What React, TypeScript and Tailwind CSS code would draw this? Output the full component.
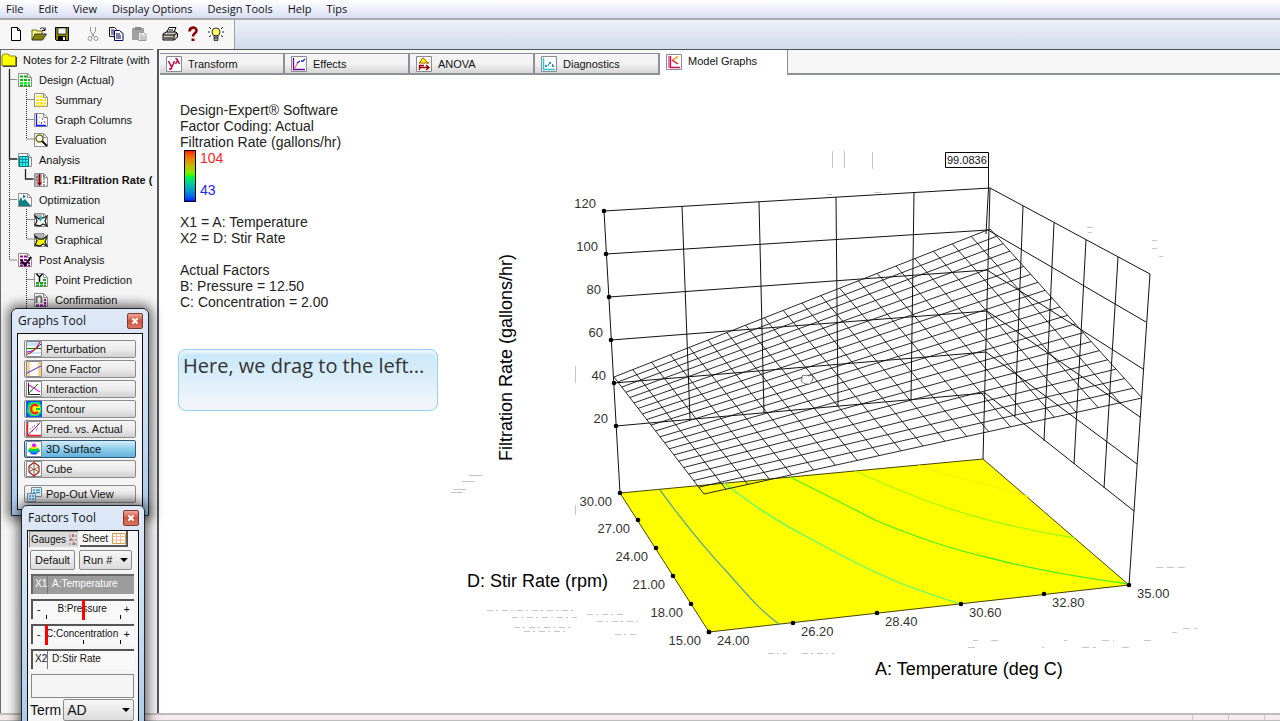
import type { ReactNode } from 'react';
import { X } from 'lucide-react';

const menuItems = ['File', 'Edit', 'View', 'Display Options', 'Design Tools', 'Help', 'Tips'];

type IconName =
    | 'folder' | 'design' | 'summary' | 'columns' | 'evaluation' | 'analysis' | 'response' | 'optimization'
    | 'numerical' | 'graphical' | 'post' | 'prediction' | 'confirmation'
    | 'transform' | 'effects' | 'anova' | 'diagnostics' | 'model'
    | 'perturbation' | 'oneFactor' | 'interaction' | 'contour' | 'predicted' | 'surface' | 'cube' | 'popout';

const page = (
    <>
        <path d="M1.5 1.5h9l4 4v9h-13z" fill="#fff" stroke="#8f8f8f" />
        <path d="M10.5 1.5v4h4" fill="none" stroke="#8f8f8f" />
    </>
);
const frame = <path d="M.5.5h15v15H.5z" fill="#fff" stroke="#8a8a90" />;

const cells = (color: string, top = 3) => (
    <path
        d={`M3 ${top + 1.5}h3m1 0h3M3 8h3m1 0h3m1 0h2M3 11h3m1 0h3m1 0h2M3 13.5h3m1 0h3m1 0h2`}
        stroke={color}
        strokeWidth="2"
        fill="none"
    />
);

const icons: Record<IconName, ReactNode> = {
    folder: (
        <>
            <path d="M1 4l1.500-2h4.500l1.500 2h6v9.500H1z" fill="#ff0" stroke="#8a8600" />
            <path d="M2 14.500h13.500V5" fill="none" stroke="#444" />
        </>
    ),
    design: <>{page}{cells('#00b400')}<path d="M3 11h3m1 0h3m1 0h2" stroke="#0f2" strokeWidth="2" /></>,
    summary: <>{page}{cells('#ffe600')}</>,
    columns: (
        <>
            {page}
            <path d="M3.500 2v11.500H13" fill="none" stroke="#11f" strokeWidth="1.300" />
            <path d="M6 5h1M6 10h1" stroke="#e8c800" strokeWidth="1.500" />
            <path d="M9 7h1m1 3h1" stroke="#f0a" strokeWidth="1.500" />
            <path d="M8 11h1" stroke="#11f" strokeWidth="1.500" />
        </>
    ),
    evaluation: (
        <>
            {page}
            <circle cx="6.500" cy="6.500" r="3.500" fill="#fff" stroke="#777000" strokeWidth="1.500" />
            <path d="M9 9l5 5" stroke="#111" strokeWidth="2" />
        </>
    ),
    analysis: (
        <>
            {page}
            <path d="M2.500 4.500h9v10h-9z" fill="#2ee" stroke="#078" />
            <path d="M5.500 5v9m3-9v9M3 7.500h8M3 10.500h8" stroke="#078" strokeWidth=".7" />
        </>
    ),
    response: (
        <>
            {page}
            <path d="M2 2h7v12H2z" fill="#b5b5b5" />
            <path d="M6.500 2v9" stroke="#900" strokeWidth="1.800" />
            <path d="M4 10.500h5L6.500 14z" fill="#900" />
            <path d="M10 4h2m-2 3h2m-2 3h2m-2 3h2M3 5h2M3 8h2" stroke="#444" />
        </>
    ),
    optimization: (
        <>
            {page}
            <path d="M2 14V9l2-4 1.500 4L8 7l6 7z" fill="#087f83" />
            <path d="M6 2.500v4l3-2z" fill="#087f83" />
        </>
    ),
    numerical: (
        <>
            {page}
            <path d="M2 2h7v4H2z" fill="#b5b5b5" />
            <path d="M2 4l4 3 4-1 4-2-2 5 2 5-4-2-3 2-5-1 2-4z" fill="#fff" stroke="#222" strokeWidth="1.300" />
            <path d="M7 4v6l3-4z" fill="#0bd" />
        </>
    ),
    graphical: (
        <>
            {page}
            <path d="M2 2h8v4H2z" fill="#b5b5b5" />
            <path d="M2 4l4 3h4l4-3-2 6 2 4-4-2-3 2-5-1 2-4z" fill="#ff0" stroke="#222" strokeWidth="1.300" />
        </>
    ),
    post: <>{page}{cells('#909')}<path d="M4 8l4 5 6-8" stroke="#000" strokeWidth="2" fill="none" /></>,
    prediction: (
        <>
            {page}
            <path d="M10 8h3M3 11h3m1 0h3m1 0h2M3 13.500h3m1 0h3m1 0h2" stroke="#19a319" strokeWidth="2" />
            <path d="M3.500 2l3 3 3-3M6.500 5v5" stroke="#000" strokeWidth="1.500" fill="none" />
        </>
    ),
    confirmation: (
        <>
            {page}
            <path d="M11 8h2m-2 3h2M3 13.500h3m1 0h3m1 0h2" stroke="#909" strokeWidth="2" />
            <path d="M3.500 11V4m0 2c2-2.500 5-2.500 5 1v4" stroke="#777" strokeWidth="2" fill="none" />
        </>
    ),
    transform: (
        <>
            {frame}
            <path d="M2.500 5l3 6M8.500 5l-3.500 8H3M9.500 2.500l1.500.5 2.500 5M11.500 4.500L9.500 8" stroke="#c00040" strokeWidth="1.500" fill="none" />
        </>
    ),
    effects: (
        <>
            {frame}
            <path d="M2.500 2v11.500H14" stroke="#609" strokeWidth="1.300" fill="none" />
            <path d="M4 12l3-6" stroke="#f36" />
            <path d="M6 7l3-2m1 0h2l2-2" stroke="#22c" strokeWidth="1.300" fill="none" />
        </>
    ),
    anova: (
        <>
            {frame}
            <path d="M3 7c2 0 2-5 4-5s3 5 6 5z" fill="#ff0" stroke="#a50" />
            <path d="M3.500 14V9.500H8M4 11.500h8M10 9l3 2.500-3 2.500" stroke="#900" strokeWidth="1.500" fill="none" />
        </>
    ),
    diagnostics: (
        <>
            {frame}
            <path d="M2.500 2v11.500H14" stroke="#29c3cf" strokeWidth="1.500" fill="none" />
            <path d="M4 10h2m2-3h2m1 3h2M7 9h1m3 0h1" stroke="#1a9ad8" strokeWidth="1.800" />
        </>
    ),
    model: (
        <>
            {frame}
            <path d="M2 2h2v12H2z" fill="#f7a" />
            <path d="M4.500 2v11.500H14" stroke="#d01050" strokeWidth="1.300" fill="none" />
            <path d="M12 2.500L7 6" stroke="#fa3" strokeWidth="2" />
            <path d="M6 6l6 4" stroke="#e0104a" strokeWidth="1.500" />
        </>
    ),
    perturbation: (
        <>
            {frame}
            <path d="M1 1h14v4H1zM1 11h14v2H1z" fill="#c8e6f5" />
            <path d="M1 7.500h14" stroke="#080" />
            <path d="M1 11c8-1 10-4 14-8" stroke="#22f" fill="none" />
            <path d="M1 13.500C8 11 11 7 14 1" stroke="#e22" strokeWidth="1.300" fill="none" />
        </>
    ),
    oneFactor: (
        <>
            {frame}
            <path d="M1 1h3v14H1zM12 1h3v14h-3z" fill="#ffd08a" />
            <path d="M1 12L15 5" stroke="#33e" />
        </>
    ),
    interaction: (
        <>
            {frame}
            <path d="M2.500 2v11.500H14" stroke="#222" fill="none" />
            <path d="M3 4l11 7" stroke="#e2d" strokeWidth="1.300" />
            <path d="M3 12l9-9" stroke="#080" />
        </>
    ),
    contour: (
        <>
            <path d="M0 0h16v16H0z" fill="#15e" />
            <path d="M2 3l3-2h8l2 3v8l-3 3H5l-4-4z" fill="#0e6" />
            <circle cx="9" cy="8" r="5.500" fill="#ff0" />
            <path d="M12 5c-4-3-7 0-7 3s3 6 7 3" stroke="#f22" strokeWidth="2.500" fill="none" />
            <path d="M10 8h4" stroke="#0c4" strokeWidth="2" />
        </>
    ),
    predicted: (
        <>
            {frame}
            <path d="M1.500 1v13.500H15" stroke="#e22" strokeWidth="1.500" fill="none" />
            <path d="M2 14L14 2" stroke="#92b" />
            <path d="M4 8h1m1 2h1m1-5h1m1 4h1m0-6h1M6 6h1m4 1h1" stroke="#92b" />
        </>
    ),
    surface: (
        <>
            {frame}
            <ellipse cx="8" cy="12" rx="3.500" ry="1.500" fill="#15f" />
            <ellipse cx="8" cy="10" rx="6" ry="2" fill="#18f" />
            <ellipse cx="8" cy="8.500" rx="5.500" ry="1.800" fill="#0d3" />
            <ellipse cx="8" cy="6.500" rx="3.500" ry="1.500" fill="#fd0" />
            <circle cx="8" cy="4.200" r="2" fill="#e1f" />
        </>
    ),
    cube: (
        <>
            {frame}
            <path d="M8 1.500l5 3.500v6l-5 4-5-4V5z" stroke="#a11" strokeWidth="1.200" fill="none" />
            <path d="M8 1.500v13M3 5l5 4 5-4M3 11l5-3 5 3" stroke="#853" fill="none" />
        </>
    ),
    popout: (
        <>
            <path d="M5.500 1.500h10v9h-10z" fill="#e5f4fc" stroke="#789" />
            <path d="M1.500 7.500h8v8h-8z" fill="#d5edfb" stroke="#789" />
            <path d="M7 4h2m1 0h4M7 6.500h2m1 0h4M3 10h2m1 0h2M3 13h2m1 0h2" stroke="#39c" strokeWidth="1.300" />
        </>
    ),
};

function Icon({ name, className = 'w-4 h-4' }: { name: IconName; className?: string }) {
    return (
        <svg viewBox="0 0 16 16" className={`${className} shrink-0`} aria-hidden="true">
            {icons[name]}
        </svg>
    );
}

const toolbar: { label: string; space: string; art: ReactNode }[] = [
    {
        label: 'New',
        space: 'ml-2',
        art: <path d="M3.500 1.500h6l3 3v10h-9zM9.500 1.500v3h3" fill="#fff" stroke="#000" />,
    },
    {
        label: 'Open',
        space: 'ml-[7px]',
        art: (
            <>
                <path d="M1 14V4h4l1 1h5v3" fill="#ffff8c" stroke="#6b6a00" />
                <path d="M1 14l3-6h11.500l-4 6z" fill="#868400" stroke="#333" />
                <path d="M9 3c2-2 4-1 5 1m0-2.500V4.500h-3" fill="none" stroke="#000" />
            </>
        ),
    },
    {
        label: 'Save',
        space: 'ml-[7px]',
        art: (
            <>
                <path d="M1.500 1.500h13v13h-12l-1-1z" fill="#868400" stroke="#000" />
                <path d="M4 2h8v6H4z" fill="#f4f4f4" stroke="#000" strokeWidth=".6" />
                <path d="M4 10h8v4H4z" fill="#000" />
                <path d="M9 11h2v3H9z" fill="#eee" />
            </>
        ),
    },
    {
        label: 'Cut',
        space: 'ml-[15px]',
        art: (
            <>
                <path d="M5.500 1v4l4 6M10.500 1v4l-4 6" fill="none" stroke="#999" />
                <circle cx="5" cy="12.500" r="2" fill="none" stroke="#999" />
                <circle cx="11" cy="12.500" r="2" fill="none" stroke="#999" />
            </>
        ),
    },
    {
        label: 'Copy',
        space: 'ml-[7px]',
        art: (
            <>
                <path d="M1.500 1.500h5l2 2v7h-7z" fill="#fff" stroke="#111" />
                <path d="M6.500 4.500h5l3.500 3v7H6.500z" fill="#fff" stroke="#006" />
                <path d="M3 4h3M3 6h3M3 8h3M8 8h4m-4 2h5m-5 2h5" stroke="#006" />
            </>
        ),
    },
    {
        label: 'Paste',
        space: 'ml-[7px]',
        art: (
            <>
                <path d="M1 2h12v12H1z" fill="#a0a0a0" />
                <path d="M4 1h6v3H4z" fill="#888" />
                <path d="M7.500 6.500h5l2.500 2v6H7.500z" fill="#f2f2f2" stroke="#999" />
                <path d="M9 9h3m-3 2h5m-5 2h5" stroke="#999" />
            </>
        ),
    },
    {
        label: 'Print',
        space: 'ml-[15px]',
        art: (
            <>
                <path d="M5 6l2-4.500h7L12 6" fill="#fff" stroke="#000" />
                <path d="M1 8l3-2h10l1.500 1.500V11l-3 3H1z" fill="#ccc" stroke="#000" />
                <path d="M1 9h11v5M12 9l3-2M2 12h9M7 4h4" fill="none" stroke="#000" />
                <path d="M8 10.500h2" stroke="#dd0" />
            </>
        ),
    },
    {
        label: 'Help',
        space: 'ml-[7px]',
        art: (
            <>
                <path d="M4.500 5.500c0-5 7-5 7-1 0 3-3.500 2.500-3.500 6" fill="none" stroke="#8b0000" strokeWidth="2.600" />
                <path d="M6.500 12.500h3v2.500h-3z" fill="#8b0000" />
            </>
        ),
    },
    {
        label: 'Tips',
        space: 'ml-[7px]',
        art: (
            <>
                <circle cx="8" cy="6" r="4" fill="#ffff60" stroke="#333" />
                <path d="M6 10h4v4.500H6z" fill="#aaa" stroke="#222" strokeWidth=".8" />
                <path d="M1 1l2 2M15 1l-2 2M0 6h2m12 0h2M1 11l2-1.500M15 11l-2-1.500M6 12h4" stroke="#222" />
            </>
        ),
    },
];

const tree: { label: string; icon: IconName; level: number }[] = [
    { label: 'Notes for 2-2 Filtrate (with', icon: 'folder', level: 0 },
    { label: 'Design (Actual)', icon: 'design', level: 1 },
    { label: 'Summary', icon: 'summary', level: 2 },
    { label: 'Graph Columns', icon: 'columns', level: 2 },
    { label: 'Evaluation', icon: 'evaluation', level: 2 },
    { label: 'Analysis', icon: 'analysis', level: 1 },
    { label: 'R1:Filtration Rate (', icon: 'response', level: 2 },
    { label: 'Optimization', icon: 'optimization', level: 1 },
    { label: 'Numerical', icon: 'numerical', level: 2 },
    { label: 'Graphical', icon: 'graphical', level: 2 },
    { label: 'Post Analysis', icon: 'post', level: 1 },
    { label: 'Point Prediction', icon: 'prediction', level: 2 },
    { label: 'Confirmation', icon: 'confirmation', level: 2 },
];
const indents = ['pl-0', 'pl-4', 'pl-8'];

const tabs: { label: string; icon: IconName }[] = [
    { label: 'Transform', icon: 'transform' },
    { label: 'Effects', icon: 'effects' },
    { label: 'ANOVA', icon: 'anova' },
    { label: 'Diagnostics', icon: 'diagnostics' },
];

const graphButtons: { label: string; icon: IconName }[] = [
    { label: 'Perturbation', icon: 'perturbation' },
    { label: 'One Factor', icon: 'oneFactor' },
    { label: 'Interaction', icon: 'interaction' },
    { label: 'Contour', icon: 'contour' },
    { label: 'Pred. vs. Actual', icon: 'predicted' },
    { label: '3D Surface', icon: 'surface' },
    { label: 'Cube', icon: 'cube' },
];

type Point = [number, number];

const lerp = (a: Point, b: Point, t: number): Point => [a[0] + (b[0] - a[0]) * t, a[1] + (b[1] - a[1]) * t];
const seg = (a: Point, b: Point) => `M${a[0].toFixed(1)} ${a[1].toFixed(1)}L${b[0].toFixed(1)} ${b[1].toFixed(1)}`;

// corners of the response surface
const left: Point = [614, 377];
const back: Point = [990, 229];
const right: Point = [1142, 398];
const front: Point = [704, 494];

// rows spread out slightly towards the viewer
const nearer = (t: number) => t / (t + 1.17 * (1 - t));

const steps = Array.from({ length: 21 }, (_, i) => i / 20);
const mesh = steps
    .map(
        (t) =>
            seg(lerp(left, front, nearer(t)), lerp(back, right, nearer(t))) +
            seg(lerp(left, back, t), lerp(front, right, t))
    )
    .join('');

const levels: { label: string; l: Point; c: Point; r: Point }[] = [
    { label: '120', l: [604, 211], c: [990, 188], r: [1150, 274] },
    { label: '100', l: [606, 254], c: [988, 230], r: [1146, 322] },
    { label: '80', l: [609, 297], c: [987, 270], r: [1143, 369] },
    { label: '60', l: [611, 340], c: [987, 311], r: [1140, 417] },
    { label: '40', l: [614, 383], c: [986, 352], r: [1137, 464] },
    { label: '20', l: [616, 426], c: [985, 393], r: [1134, 511] },
];

const verticals: [Point, Point][] = [
    [[682, 206], [690, 419]],
    [[759, 202], [764, 413]],
    [[836, 197], [838, 406]],
    [[914, 193], [911, 400]],
    [[1023, 206], [1015, 416]],
    [[1054, 223], [1044, 441]],
    [[1086, 240], [1074, 464]],
    [[1118, 257], [1104, 488]],
    [[604, 211], [620, 493]],
    [[990, 188], [983, 459]],
    [[1150, 274], [1129, 585]],
];

const stirTicks: { label: string; at: Point }[] = [
    { label: '30.00', at: [620, 493] },
    { label: '27.00', at: [638, 520] },
    { label: '24.00', at: [656, 548] },
    { label: '21.00', at: [673, 576] },
    { label: '18.00', at: [691, 604] },
    { label: '15.00', at: [709, 632] },
];
const tempTicks: { label: string; at: Point }[] = [
    { label: '24.00', at: [709, 632] },
    { label: '26.20', at: [793, 623] },
    { label: '28.40', at: [877, 613] },
    { label: '30.60', at: [961, 604] },
    { label: '32.80', at: [1044, 594] },
    { label: '35.00', at: [1129, 585] },
];

function SurfacePlot() {
    return (
        <svg viewBox="440 75 840 638" className="w-full h-auto" role="img" aria-label="Filtration rate response surface">
            <path d="M620 493L983 459 1129 585 709 632z" fill="#ff0" stroke="#444400" />
            <g fill="none" strokeWidth="1.3">
                <path d="M660 490C682 520 708 552 728 573C748 596 762 612 780 625" stroke="#5fa98c" />
                <path d="M724 483C754 506 775 520 809 538C842 556 868 570 900 583C924 592 944 599 961 604" stroke="#5dfa70" />
                <path d="M790 477C820 492 850 507 875 520C915 537 950 549 990 558C1035 570 1085 578 1129 584" stroke="#4df020" />
                <path d="M855 471C884 484 908 494 930 502C970 517 1030 531 1075 538" stroke="#a8f80c" />
                <path d="M918 465C946 475 966 480 985 484C1005 490 1018 494 1029 497" stroke="#ffec00" />
            </g>
            <path d={mesh} fill="none" stroke="#111" strokeWidth=".9" />
            <g fill="none" stroke="#111">
                {levels.map(({ label, l, c, r }) => (
                    <path key={label} d={seg(l, c) + seg(c, r)} />
                ))}
                {verticals.map(([a, b]) => (
                    <path key={a[0]} d={seg(a, b)} />
                ))}
                <path d="M988.500 160v28L986 234" />
            </g>
            <path d="M945.500 152.500h43v15h-43z" fill="#fff" stroke="#000" />
            <text x="947" y="164" fontSize="11" fill="#111">99.0836</text>
            <path d="M802 379v-3l2-1 1 1 2-1 2 1 3-1 1 3-1 3-2 3h-5l-4-3z" fill="#fff" stroke="#444" strokeWidth=".7" />

            {[...stirTicks, ...tempTicks].map(({ at }, i) => (
                <circle key={i} cx={at[0]} cy={at[1]} r="2.3" />
            ))}
            {levels.map(({ label, l }) => (
                <g key={label}>
                    <circle cx={l[0]} cy={l[1]} r="2.3" />
                    <text x={l[0] - 8} y={l[1] - 3} textAnchor="end" fontSize="13" fill="#333">{label}</text>
                </g>
            ))}
            {stirTicks.map(({ label, at }) => (
                <text key={label} x={at[0] - 8} y={at[1] + 13} textAnchor="end" fontSize="13" fill="#333">{label}</text>
            ))}
            {tempTicks.map(({ label, at }) => (
                <text key={label} x={at[0] + 8} y={at[1] + 13} fontSize="13" fill="#333">{label}</text>
            ))}
            <text x="467" y="587" fontSize="18">D: Stir Rate (rpm)</text>
            <text x="875" y="675" fontSize="18">A: Temperature (deg C)</text>
            <text transform="translate(512 461) rotate(-90)" fontSize="18">Filtration Rate (gallons/hr)</text>

            <g fill="none" stroke="#c6c6c6">
                <path d="M832.500 151v17M844.500 151v17M872.500 152v17M575.500 366v17M575.500 505v10" />
                <path d="M469 475.500h13M462 481.500h13M453 489.500h13M451 492.500h12M1087 227.500h6M1088 232.500h4M1152 240.500h5M1152 248.500h5M1159 256.500h4M874 192.500h8M827 194.500h5" />
                <path d="M487 610.500h90M512 617.500h65M514 627.500h57M524 631.500h44M587 614.500h38M597 621.500h40M615 634.500h22M768 653.500h18M802 653.500h32" strokeDasharray="6 3 2 4" />
                <path d="M973 640.500h5M991 640.500h10M1064 640.500h3M1102 640.500h12M1144 640.500h10M968 647.500h10M1042 647.500h2M1082 647.500h14M1122 647.500h10M1156 567.500h30M1172 632.500h5M1183 628.500h14" strokeDasharray="7 4" />
            </g>
        </svg>
    );
}

function ToolWindow({ title, className, children }: { title: string; className: string; children: ReactNode }) {
    return (
        <section className={`absolute rounded-t-md border border-[#1c2532] bg-linear-to-b from-[#dfe9f8] via-[#c9dcf2] to-[#a9c8ea] px-[5px] pb-[5px] shadow-[0_0_12px_3px_rgba(0,0,0,0.6)] ${className}`}>
            <header className="flex h-6 items-center justify-between pl-px">
                <h2 className="font-['Open_Sans',sans-serif] text-[12px] leading-4">{title}</h2>
                <button aria-label={`Close ${title}`} className="flex h-4 w-4 items-center justify-center rounded-xs border border-[#7c3a33] bg-linear-to-b from-[#eaa89a] via-[#d0523c] to-[#d9765f] text-white">
                    <X className="h-2 w-2" strokeWidth={6} />
                </button>
            </header>
            <div className="border border-[#111] bg-[#f5f5f5]">{children}</div>
        </section>
    );
}

function GraphButton({ label, icon, active }: { label: string; icon: IconName; active?: boolean }) {
    return (
        <button
            className={`flex h-[18px] w-full items-center gap-1 rounded-xs border pl-px whitespace-nowrap ${
                active
                    ? 'border-[#2b5a76] bg-linear-to-b from-[#d5edfa] via-[#8fcdec] to-[#62b2dc]'
                    : 'border-[#8b8b8b] bg-linear-to-b from-[#f5f5f5] via-[#ececec] to-[#d2d2d2]'
            }`}
        >
            <Icon name={icon} />
            {label}
        </button>
    );
}

function Gauge({ label, value }: { label: string; value: number }) {
    return (
        <label className="relative flex h-5 items-start justify-between border-t-2 border-l-2 border-[#555] bg-[#f8f8f8] px-1 leading-4">
            <span>-</span>
            <span className="text-[10px]">{label}</span>
            <span>+</span>
            <span className="absolute bottom-0 left-[13px] h-1 w-px bg-black" />
            <span className="absolute bottom-0 left-[50px] h-1 w-px bg-black" />
            <span className="absolute bottom-0 left-[87px] h-1 w-px bg-black" />
            <input
                type="range"
                defaultValue={value}
                className="absolute -top-px left-3 h-5 w-[77px] appearance-none bg-transparent [&::-webkit-slider-thumb]:h-5 [&::-webkit-slider-thumb]:w-[3px] [&::-webkit-slider-thumb]:appearance-none [&::-webkit-slider-thumb]:bg-[#f00]"
            />
        </label>
    );
}

function Picker({ label, option, className }: { label: string; option: string; className: string }) {
    return (
        <div className="relative flex-1">
            <select aria-label={label} className={`block w-full appearance-none rounded-xs border border-[#8b8b8b] bg-linear-to-b from-[#f7f7f7] to-[#dcdcdc] pl-[3px] ${className}`}>
                <option>{option}</option>
            </select>
            <svg viewBox="0 0 8 4" className="pointer-events-none absolute top-1/2 right-1 h-1 w-2 -translate-y-1/2">
                <path d="M0 0h8L4 4z" />
            </svg>
        </div>
    );
}

export default function App() {
    return (
        <div className="relative flex h-screen flex-col overflow-hidden bg-[#f5f5f5] font-['Liberation_Sans',Arial,sans-serif] text-[11px] text-[#111]">
            <nav className="flex h-5 items-center gap-[15px] border-b-2 border-[#a9a9ad] bg-linear-to-b from-white via-[#eceffa] to-[#d9def2] pl-1.5 font-['Open_Sans',sans-serif] text-[11px]">
                {menuItems.map((item) => (
                    <button key={item} className="leading-4">{item}</button>
                ))}
            </nav>

            <div className="flex h-[29px] bg-linear-to-b from-[#eef1f8] to-[#d2dbeb]">
                <div className="flex w-[235px] items-center border-r border-[#a0a0a0] bg-[#f7f7f7] pb-px">
                    {toolbar.map(({ label, space, art }) => (
                        <button key={label} aria-label={label} className={space}>
                            <svg viewBox="0 0 16 16" className="h-4 w-4">{art}</svg>
                        </button>
                    ))}
                </div>
            </div>

            <div className="flex min-h-0 flex-1">
                <aside className="relative w-[153px] shrink-0 overflow-hidden border-t border-l border-[#6a6a6a]">
                    <svg className="absolute top-0 left-0 h-[270px] w-10" fill="none" stroke="#222" aria-hidden="true">
                        <path d="M8.500 19v90h8M24.500 119v10h8" strokeWidth="1.300" />
                        <path d="M8.500 110v100h8M8.500 29.500h8M8.500 149.500h8M25.500 39v50h7M25.500 49.500h7M25.500 69.500h7M25.500 159v30h7M25.500 169.500h7M25.500 219v50M25.500 229.500h7M25.500 249.500h7" strokeDasharray="1 1" />
                    </svg>
                    <ul className="relative">
                        {tree.map(({ label, icon, level }) => (
                            <li key={label} className={indents[level]}>
                                <button className={`flex h-5 items-center whitespace-nowrap ${icon === 'response' ? 'gap-[5px] font-bold' : 'gap-1.5'}`}>
                                    <Icon name={icon} />
                                    {label}
                                </button>
                            </li>
                        ))}
                    </ul>
                </aside>

                <main className="ml-1 flex min-w-0 flex-1 flex-col border-t border-l-2 border-[#55555c] bg-white">
                    <div role="tablist" className="flex h-[25px] items-end bg-[#f6f6f6] pl-px">
                        {tabs.map(({ label, icon }) => (
                            <button
                                key={label}
                                role="tab"
                                className="flex h-[22px] w-[125px] items-center gap-1.5 border-t border-r-2 border-b-2 border-[#8f8f99] bg-linear-to-b from-[#f3f3f3] from-50% to-[#d6d6d6] pt-px pl-1.5"
                            >
                                <Icon name={icon} />
                                {label}
                            </button>
                        ))}
                        <button role="tab" aria-selected="true" className="flex h-[25px] w-32 items-center gap-1.5 border-r border-[#8f8f99] bg-white pb-0.5 pl-1.5">
                            <Icon name="model" />
                            Model Graphs
                        </button>
                        <div className="h-[25px] flex-1 border-b-2 border-[#8f8f99]" />
                    </div>

                    <div className="flex items-start">
                        <div className="w-[281px] shrink-0 pt-[27px] pl-[19px] text-[14px] leading-4 text-[#222]">
                            <p className="pl-0.5">Design-Expert® Software</p>
                            <p className="pl-0.5">Factor Coding: Actual</p>
                            <p className="pl-0.5">Filtration Rate (gallons/hr)</p>
                            <div className="flex h-[52px] gap-1 pl-1.5">
                                <div className="w-3 border border-black bg-linear-to-b from-[#f00] via-[#0f0] to-[#00f]" />
                                <div className="flex flex-col gap-4">
                                    <span className="text-[#f22]">104</span>
                                    <span className="text-[#22f]">43</span>
                                </div>
                            </div>
                            <p className="mt-3 pl-0.5">X1 = A: Temperature</p>
                            <p className="pl-0.5">X2 = D: Stir Rate</p>
                            <p className="mt-4 pl-0.5">Actual Factors</p>
                            <p className="pl-0.5">B: Pressure = 12.50</p>
                            <p className="pl-0.5">C: Concentration = 2.00</p>
                            <div className="mt-[39px] h-[62px] w-[260px] rounded-lg border border-[#8fd0f5] bg-linear-to-b from-[#c6e7fb] to-[#f4f6f9] pt-1 pl-1 font-['Open_Sans',sans-serif] text-[20px] leading-6 whitespace-nowrap text-[#333] shadow-[inset_0_3px_3px_rgba(255,255,255,0.7)]">
                                Here, we drag to the left...
                            </div>
                        </div>
                        <div className="min-w-0 flex-1">
                            <SurfacePlot />
                        </div>
                    </div>
                </main>
            </div>

            <footer className="flex h-2 shrink-0 justify-end border-t-2 border-b border-[#bdbdbd] bg-[#f7e9ec]">
                <div className="w-9 border-l border-[#d0c5c8]" />
                <div className="w-9 border-l border-[#d0c5c8]" />
                <div className="w-4 border-l border-[#d0c5c8]" />
            </footer>

            <ToolWindow title="Graphs Tool" className="top-[308px] left-[11px] w-[138px]">
                <div className="flex flex-col gap-0.5 p-1.5">
                    {graphButtons.map(({ label, icon }) => (
                        <GraphButton key={label} label={label} icon={icon} active={icon === 'surface'} />
                    ))}
                    <div className="pt-[5px]">
                        <GraphButton label="Pop-Out View" icon="popout" />
                    </div>
                </div>
            </ToolWindow>

            <ToolWindow title="Factors Tool" className="top-[505px] left-[21px] w-[124px]">
                <div className="pr-1 pb-3 pl-px">
                    <div className="flex h-4 gap-0.5 text-[10px]">
                        <button className="flex w-[49px] items-center gap-0.5 border-t border-l border-[#888] bg-[#dadada] pl-px">
                            Gauges
                            <svg viewBox="0 0 10 14" className="h-3.5 w-2.5">
                                <path d="M1 3h8M1 7h8M1 11h8" stroke="#777" strokeDasharray="2 1" />
                                <path d="M5 1v3M3 5v3M6 9v3" stroke="#c22" />
                            </svg>
                        </button>
                        <button className="flex w-12 items-center gap-1 border-r-2 border-b-2 border-[#555] bg-[#fbfbfb] pl-0.5">
                            Sheet
                            <svg viewBox="0 0 14 11" className="h-[11px] w-3.5">
                                <path d="M.5.5h13v10H.5z" fill="#fff" stroke="#d39a40" />
                                <path d="M4.500 1v9m4-9v9M1 3.500h12M1 7h12" stroke="#f2b8a0" />
                            </svg>
                        </button>
                    </div>
                    <div className="mt-[3px] flex h-5 gap-1 pr-0.5 pl-px">
                        <button className="w-[45px] rounded-xs border border-[#8b8b8b] bg-linear-to-b from-[#f7f7f7] to-[#dcdcdc]">Default</button>
                        <Picker label="Run" option="Run #" className="h-5" />
                    </div>
                    <div className="mt-1 flex flex-col gap-[5px] pl-0.5">
                        <div className="flex h-5 gap-1 border-t-2 border-l-2 border-[#666] bg-[#9c9c9c] pl-0.5 text-[10px] leading-4 text-white">
                            <span className="w-[13px] border-r border-[#777]">X1</span>
                            <span>A:Temperature</span>
                        </div>
                        <Gauge label="B:Pressure" value={50} />
                        <Gauge label="C:Concentration" value={0} />
                        <div className="flex h-5 gap-1 border-t-2 border-l-2 border-[#555] bg-[#f8f8f8] pl-0.5 text-[10px] leading-4">
                            <span className="w-[13px] border-r border-[#777]">X2</span>
                            <span>D:Stir Rate</span>
                        </div>
                        <div className="h-6 border border-[#888]" />
                    </div>
                    <div className="mt-px flex items-center gap-0.5 pl-px text-[14px]">
                        Term
                        <Picker label="Term" option="AD" className="h-[22px]" />
                    </div>
                </div>
            </ToolWindow>
        </div>
    );
}
